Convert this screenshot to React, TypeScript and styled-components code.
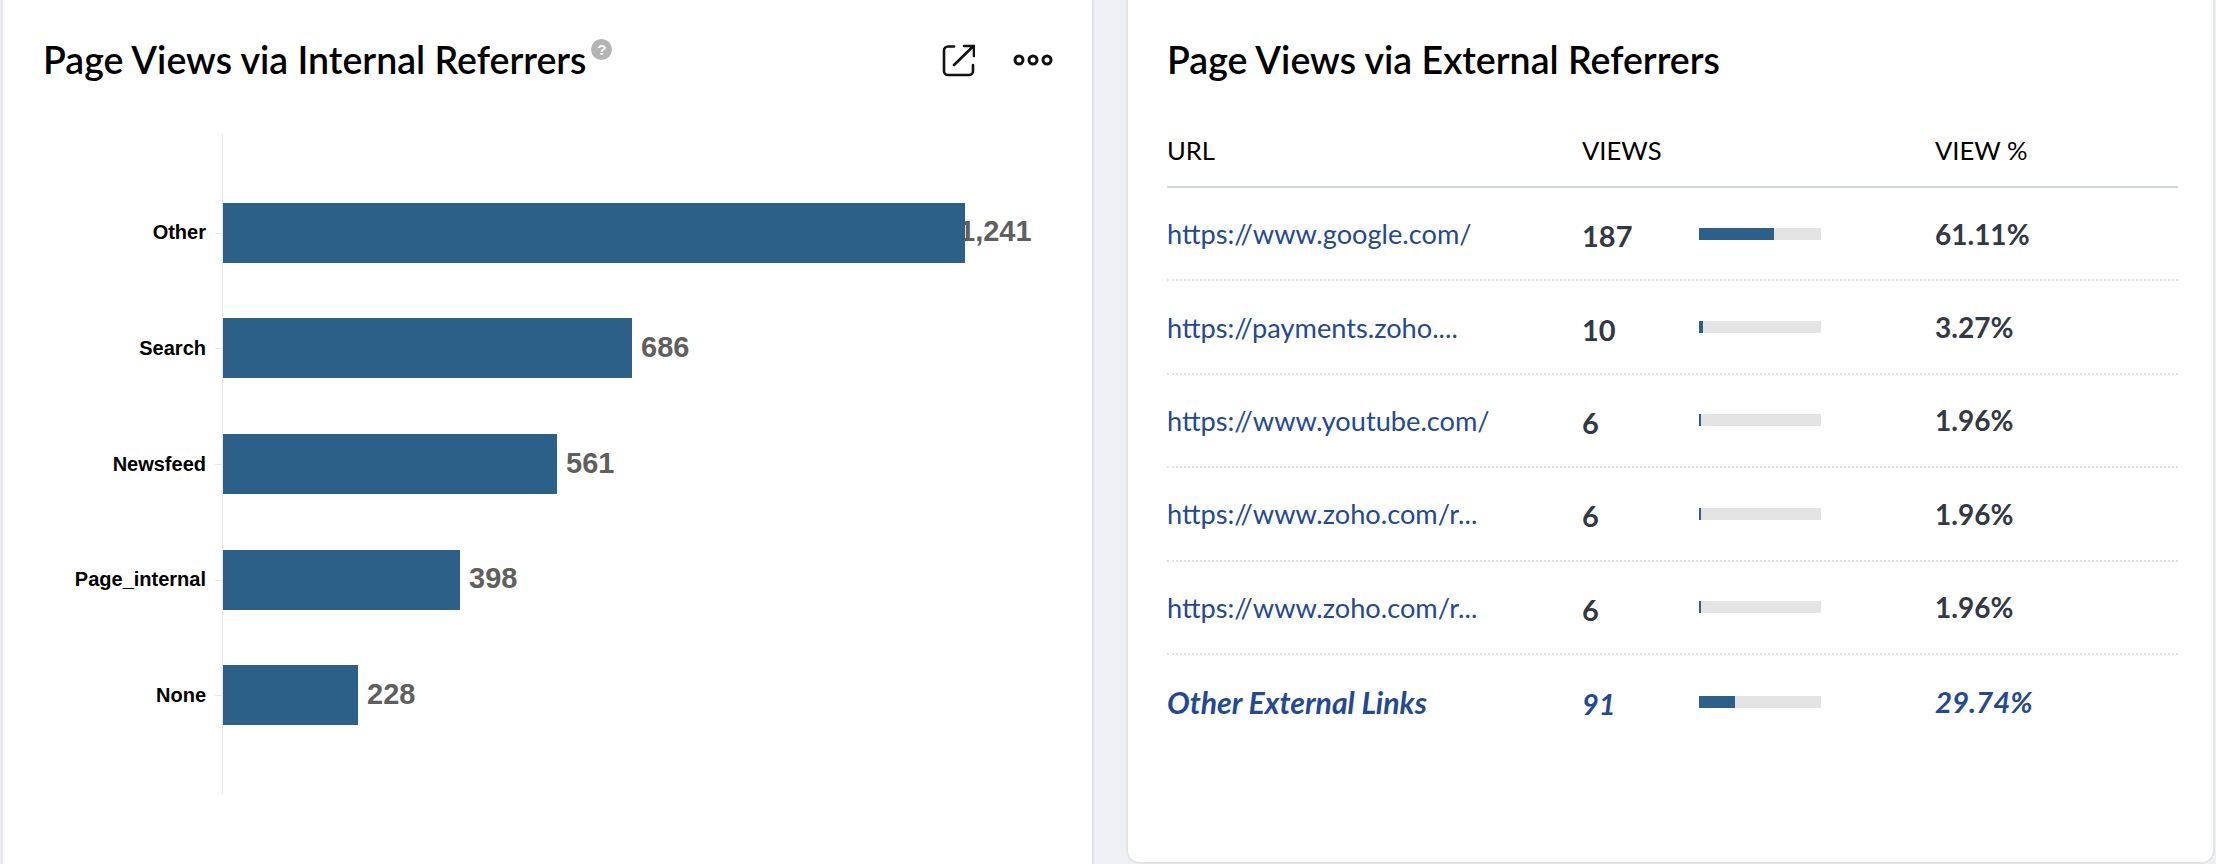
import React from "react";
import styled, { createGlobalStyle } from "styled-components";

const GlobalStyle = createGlobalStyle`
    html, body {
        margin: 0;
        padding: 0;
        background: #eff0f5;
        overflow: hidden;
    }
    * {
        box-sizing: border-box;
    }
`;

const Page = styled.div`
    display: flex;
    height: 864px;
    padding-left: 1px;
    font-family: "Lato", "Liberation Sans", sans-serif;
`;

const Card = styled.section`
    background: #fff;
    border: 2px solid #e3e4e8;
    border-radius: 14px;
`;

const LeftCard = styled(Card)`
    width: 1093px;
    height: 900px;
    margin-top: -12px;
    padding: 50px 37px 0 40px;
`;

const RightCard = styled(Card)`
    width: 1089px;
    height: 876px;
    margin: -12px 0 0 32px;
    padding: 50px 0 0 39px;
`;

const TitleRow = styled.div`
    display: flex;
    align-items: center;
    height: 40px;
`;

const Title = styled.h2`
    margin: -1px 0 0;
    font-size: 37.5px;
    font-weight: 600;
    line-height: 40px;
    color: #000;
`;

const HelpDot = styled.span`
    display: flex;
    align-items: center;
    justify-content: center;
    width: 21px;
    height: 21px;
    margin: -22px 0 0 5px;
    border-radius: 50%;
    background: #b4b4b4;
    color: #fff;
    font: 700 15px "Liberation Sans", sans-serif;
`;

const Tools = styled.div`
    display: flex;
    align-items: center;
    gap: 38px;
    margin-left: auto;
    padding-right: 2px;
`;

const Chart = styled.div`
    display: flex;
    flex-direction: column;
    justify-content: center;
    gap: 55.7px;
    height: 660px;
    margin: 54px 0 0 179px;
    border-left: 1px solid #e6e6e6;
`;

const BarRow = styled.div`
    position: relative;
    display: flex;
    align-items: center;
    height: 60px;
    font-family: "Liberation Sans", sans-serif;
`;

const BarLabel = styled.span`
    position: absolute;
    right: 100%;
    margin-right: 17px;
    font-size: 20px;
    font-weight: 700;
    color: #000;
    white-space: nowrap;
    &::after {
        content: "";
        position: absolute;
        top: 50%;
        right: -17px;
        width: 8px;
        height: 1px;
        background: #e6e6e6;
    }
`;

const Bar = styled.div<{ $width: number }>`
    position: relative;
    z-index: 1;
    width: ${(p) => p.$width}px;
    height: 60px;
    background: #2c6088;
`;

const BarValue = styled.span<{ $tight?: boolean }>`
    margin: -2px 0 0 ${(p) => (p.$tight ? -6 : 9)}px;
    font-size: 29px;
    font-weight: 700;
    color: #5f5f5f;
`;

const Table = styled.div`
    width: 1011px;
    margin-top: 34px;
`;

const Row = styled.div<{ $head?: boolean; $last?: boolean }>`
    display: grid;
    grid-template-columns: 415px 117px 236px 1fr;
    align-items: center;
    height: ${(p) => (p.$head ? 74 : 93.4)}px;
    border-bottom: ${(p) =>
        p.$head ? "2px solid #cfd4da" : p.$last ? "none" : "2px dotted #dfe1e4"};
    color: ${(p) => (p.$last ? "#25498f" : "#333845")};
    font-style: ${(p) => (p.$last ? "italic" : "normal")};
    font-weight: ${(p) => (p.$last ? 700 : 400)};
`;

const HeadCell = styled.div`
    font-size: 25.6px;
    color: #000;
`;

const UrlCell = styled.a<{ $last?: boolean }>`
    font-size: ${(p) => (p.$last ? 30.2 : 27.2)}px;
    font-weight: inherit;
    color: #25498f;
    text-decoration: none;
    white-space: nowrap;
`;

const ViewsCell = styled.div`
    padding-top: 4px;
    font-size: 29px;
    font-weight: 700;
`;

const PercentCell = styled.div<{ $last?: boolean }>`
    font-size: ${(p) => (p.$last ? 29.4 : 28)}px;
    font-weight: 700;
`;

const Track = styled.div`
    width: 122px;
    height: 12px;
    background: #e4e4e4;
`;

const Fill = styled.div`
    height: 100%;
    background: #2c6088;
`;

const ExternalIcon = () => (
    <svg width="33" height="33" viewBox="0 0 33 33" fill="none" stroke="#111" strokeWidth="2.6" strokeLinecap="round" strokeLinejoin="round">
        <path d="M12 2.5H6a4 4 0 0 0-4 4V27a4 4 0 0 0 4 4h21a4 4 0 0 0 4-4v-6" />
        <path d="M12 21 31.5 2M22 2h10v10" />
    </svg>
);

const MoreIcon = () => (
    <svg width="40" height="14" viewBox="0 0 40 14" fill="none" stroke="#111" strokeWidth="3">
        <circle cx="6" cy="7" r="4" />
        <circle cx="20" cy="7" r="4" />
        <circle cx="34" cy="7" r="4" />
    </svg>
);

const internal = [
    { name: "Other", value: "1,241", width: 742 },
    { name: "Search", value: "686", width: 409 },
    { name: "Newsfeed", value: "561", width: 334 },
    { name: "Page_internal", value: "398", width: 237 },
    { name: "None", value: "228", width: 135 },
];

const external = [
    { url: "https://www.google.com/", views: 187, pct: 61.11 },
    { url: "https://payments.zoho....", views: 10, pct: 3.27 },
    { url: "https://www.youtube.com/", views: 6, pct: 1.96 },
    { url: "https://www.zoho.com/r...", views: 6, pct: 1.96 },
    { url: "https://www.zoho.com/r...", views: 6, pct: 1.96 },
    { url: "Other External Links", views: 91, pct: 29.74 },
];

const App = () => {
    return (
        <Page>
            <GlobalStyle />
            <LeftCard>
                <TitleRow>
                    <Title>Page Views via Internal Referrers</Title>
                    <HelpDot>?</HelpDot>
                    <Tools>
                        <ExternalIcon />
                        <MoreIcon />
                    </Tools>
                </TitleRow>
                <Chart>
                    {internal.map((item) => (
                        <BarRow key={item.name}>
                            <BarLabel>{item.name}</BarLabel>
                            <Bar $width={item.width} />
                            <BarValue $tight={item.name === "Other"}>{item.value}</BarValue>
                        </BarRow>
                    ))}
                </Chart>
            </LeftCard>
            <RightCard>
                <TitleRow>
                    <Title>Page Views via External Referrers</Title>
                </TitleRow>
                <Table>
                    <Row $head>
                        <HeadCell>URL</HeadCell>
                        <HeadCell>VIEWS</HeadCell>
                        <HeadCell />
                        <HeadCell>VIEW %</HeadCell>
                    </Row>
                    {external.map((row, i) => {
                        const last = i === external.length - 1;
                        return (
                            <Row key={i} $last={last}>
                                <UrlCell $last={last}>{row.url}</UrlCell>
                                <ViewsCell>{row.views}</ViewsCell>
                                <Track>
                                    <Fill style={{ width: `${row.pct}%` }} />
                                </Track>
                                <PercentCell $last={last}>{row.pct}%</PercentCell>
                            </Row>
                        );
                    })}
                </Table>
            </RightCard>
        </Page>
    );
};

export default App;
